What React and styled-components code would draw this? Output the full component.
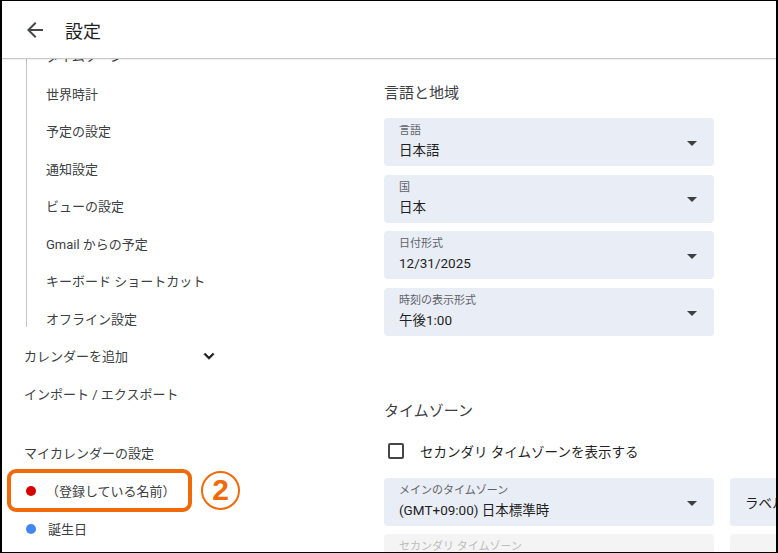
import React from "react";
import styled, { createGlobalStyle } from "styled-components";

const GlobalStyle = createGlobalStyle`
  html, body {
    margin: 0;
    padding: 0;
    background: #fff;
  }
  body {
    font-family: Roboto, "Noto Sans CJK JP", "Noto Sans", sans-serif;
    color: #3c4043;
  }
`;

const Frame = styled.div`
  width: 778px;
  height: 553px;
  box-sizing: border-box;
  border: 1px solid #000;
  border-left-width: 2px;
  border-right-width: 2px;
  display: flex;
  flex-direction: column;
  overflow: hidden;
  background: #fff;
`;

const Header = styled.header`
  height: 57px;
  flex: none;
  display: flex;
  align-items: center;
  padding-left: 21px;
  border-bottom: 1px solid #c9c9c9;
  box-shadow: 0 1px 1px rgba(0, 0, 0, 0.06);
  position: relative;
  z-index: 2;
  background: #fff;
`;

const BackButton = styled.button`
  width: 24px;
  height: 24px;
  padding: 0;
  border: none;
  background: none;
  display: flex;
  color: #444746;
  margin-right: 18px;
  margin-top: 1px;
`;

const Title = styled.h1`
  margin: 0;
  font-size: 18px;
  font-weight: 400;
  color: #1f1f1f;
  margin-top: 1px;
`;

const Body = styled.div`
  flex: 1;
  display: flex;
  overflow: hidden;
`;

const Sidebar = styled.nav`
  width: 360px;
  flex: none;
  padding-left: 22px;
  box-sizing: border-box;
  position: relative;
`;

const SubList = styled.ul`
  list-style: none;
  margin: -22px 0 0 2px;
  padding: 0 0 0 20px;
  position: relative;
  &::before {
    content: "";
    position: absolute;
    left: 0;
    top: 0;
    bottom: 10px;
    width: 1px;
    background: #c4c4c4;
  }
`;

const SubItem = styled.li`
  height: 37.5px;
  display: flex;
  align-items: center;
  font-size: 13px;
  color: #3c4043;
`;

const NavItem = styled.div`
  height: 37.5px;
  width: 195px;
  display: flex;
  align-items: center;
  justify-content: space-between;
  font-size: 13px;
  color: #3c4043;
`;

const SectionTitle = styled.div`
  margin-top: 22px;
  height: 37.5px;
  display: flex;
  align-items: center;
  font-size: 13px;
  color: #3c4043;
`;

const CalendarItem = styled.div`
  height: 38px;
  display: flex;
  align-items: center;
  font-size: 13px;
  color: #3c4043;
  padding-left: 2px;
  position: relative;
`;

const Dot = styled.span`
  width: 10px;
  height: 10px;
  border-radius: 50%;
  background: ${(p) => p.$color};
  margin-right: ${(p) => p.$gap}px;
  flex: none;
`;

const Highlight = styled.span`
  position: absolute;
  left: -17px;
  top: -3px;
  width: 185px;
  height: 43px;
  box-sizing: border-box;
  border: 4px solid #f06a0a;
  border-radius: 9px;
  pointer-events: none;
`;

const StepBadge = styled.span`
  position: absolute;
  left: 177px;
  top: -1px;
  width: 39px;
  height: 39px;
  box-sizing: border-box;
  border: 2px solid #f06a0a;
  border-radius: 50%;
  display: flex;
  align-items: center;
  justify-content: center;
  color: #f06a0a;
  font-family: "Liberation Sans", Arial, sans-serif;
  font-weight: 700;
  font-size: 30px;
  line-height: 1;
`;

const Main = styled.main`
  flex: 1;
  padding: 23px 0 0 22px;
  overflow: hidden;
`;

const Heading = styled.h2`
  margin: 0;
  font-size: 15px;
  font-weight: 400;
  line-height: 22px;
  color: #3c4043;
  margin-top: ${(p) => p.$top || 0}px;
`;

const FieldStack = styled.div`
  display: flex;
  flex-direction: column;
  gap: 8.7px;
  margin-top: 14px;
`;

const FieldRow = styled.div`
  display: flex;
  gap: 16px;
  margin-top: ${(p) => p.$top || 0}px;
`;

const Field = styled.div`
  width: 330px;
  height: 48px;
  flex: none;
  box-sizing: border-box;
  border-radius: 4px;
  background: ${(p) => (p.$disabled ? "#f4f4f5" : "#e9edf6")};
  display: flex;
  align-items: center;
  justify-content: space-between;
  padding: 0 17px 0 15px;
`;

const FieldText = styled.div`
  display: flex;
  flex-direction: column;
  align-self: stretch;
  padding-top: 6px;
`;

const FieldLabel = styled.span`
  font-size: 11px;
  line-height: 14px;
  color: ${(p) => (p.$disabled ? "#bcbcbc" : "#5f6368")};
`;

const FieldValue = styled.span`
  font-size: 13.5px;
  line-height: 21px;
  margin-top: 2px;
  color: #1f1f1f;
  white-space: nowrap;
`;

const Caret = styled.span`
  width: 0;
  height: 0;
  border-left: 5px solid transparent;
  border-right: 5px solid transparent;
  border-top: 5px solid #3c4043;
  margin-top: 2px;
`;

const CheckRow = styled.label`
  display: flex;
  align-items: center;
  height: 40px;
  margin-top: 9px;
  padding-left: 4px;
  font-size: 13.5px;
  color: #1f1f1f;
`;

const CheckBox = styled.span`
  width: 16px;
  height: 16px;
  box-sizing: border-box;
  border: 2px solid #444746;
  border-radius: 2px;
  margin-right: 16px;
`;

const Chevron = () => (
  <svg width="20" height="20" viewBox="0 0 24 24" fill="#1f1f1f">
    <path d="M16.59 8.59 12 13.17 7.41 8.59 6 10l6 6 6-6z" stroke="#1f1f1f" strokeWidth="1" />
  </svg>
);

const subItems = [
  "タイムゾーン",
  "世界時計",
  "予定の設定",
  "通知設定",
  "ビューの設定",
  "Gmail からの予定",
  "キーボード ショートカット",
  "オフライン設定",
];

const regionFields = [
  { label: "言語", value: "日本語" },
  { label: "国", value: "日本" },
  { label: "日付形式", value: "12/31/2025" },
  { label: "時刻の表示形式", value: "午後1:00" },
];

export default function App() {
  return (
    <>
      <GlobalStyle />
      <Frame>
        <Header>
          <BackButton aria-label="戻る">
            <svg width="24" height="24" viewBox="0 0 24 24" fill="currentColor">
              <path d="M20 11H7.83l5.59-5.59L12 4l-8 8 8 8 1.41-1.41L7.83 13H20v-2z" />
            </svg>
          </BackButton>
          <Title>設定</Title>
        </Header>
        <Body>
          <Sidebar>
            <SubList>
              {subItems.map((item) => (
                <SubItem key={item}>{item}</SubItem>
              ))}
            </SubList>
            <NavItem>
              カレンダーを追加
              <Chevron />
            </NavItem>
            <NavItem>インポート / エクスポート</NavItem>
            <SectionTitle>マイカレンダーの設定</SectionTitle>
            <CalendarItem>
              <Dot $color="#d50000" $gap={10} />
              （登録している名前）
              <Highlight />
              <StepBadge>2</StepBadge>
            </CalendarItem>
            <CalendarItem>
              <Dot $color="#4285f4" $gap={12} />
              誕生日
            </CalendarItem>
          </Sidebar>
          <Main>
            <Heading>言語と地域</Heading>
            <FieldStack>
              {regionFields.map((f) => (
                <Field key={f.label}>
                  <FieldText>
                    <FieldLabel>{f.label}</FieldLabel>
                    <FieldValue>{f.value}</FieldValue>
                  </FieldText>
                  <Caret />
                </Field>
              ))}
            </FieldStack>
            <Heading $top={64}>タイムゾーン</Heading>
            <CheckRow>
              <CheckBox />
              セカンダリ タイムゾーンを表示する
            </CheckRow>
            <FieldRow $top={7}>
              <Field>
                <FieldText>
                  <FieldLabel>メインのタイムゾーン</FieldLabel>
                  <FieldValue>(GMT+09:00) 日本標準時</FieldValue>
                </FieldText>
                <Caret />
              </Field>
              <Field>
                <FieldValue>ラベル</FieldValue>
              </Field>
            </FieldRow>
            <FieldRow $top={8}>
              <Field $disabled>
                <FieldText>
                  <FieldLabel $disabled>セカンダリ タイムゾーン</FieldLabel>
                </FieldText>
              </Field>
              <Field $disabled />
            </FieldRow>
          </Main>
        </Body>
      </Frame>
    </>
  );
}
